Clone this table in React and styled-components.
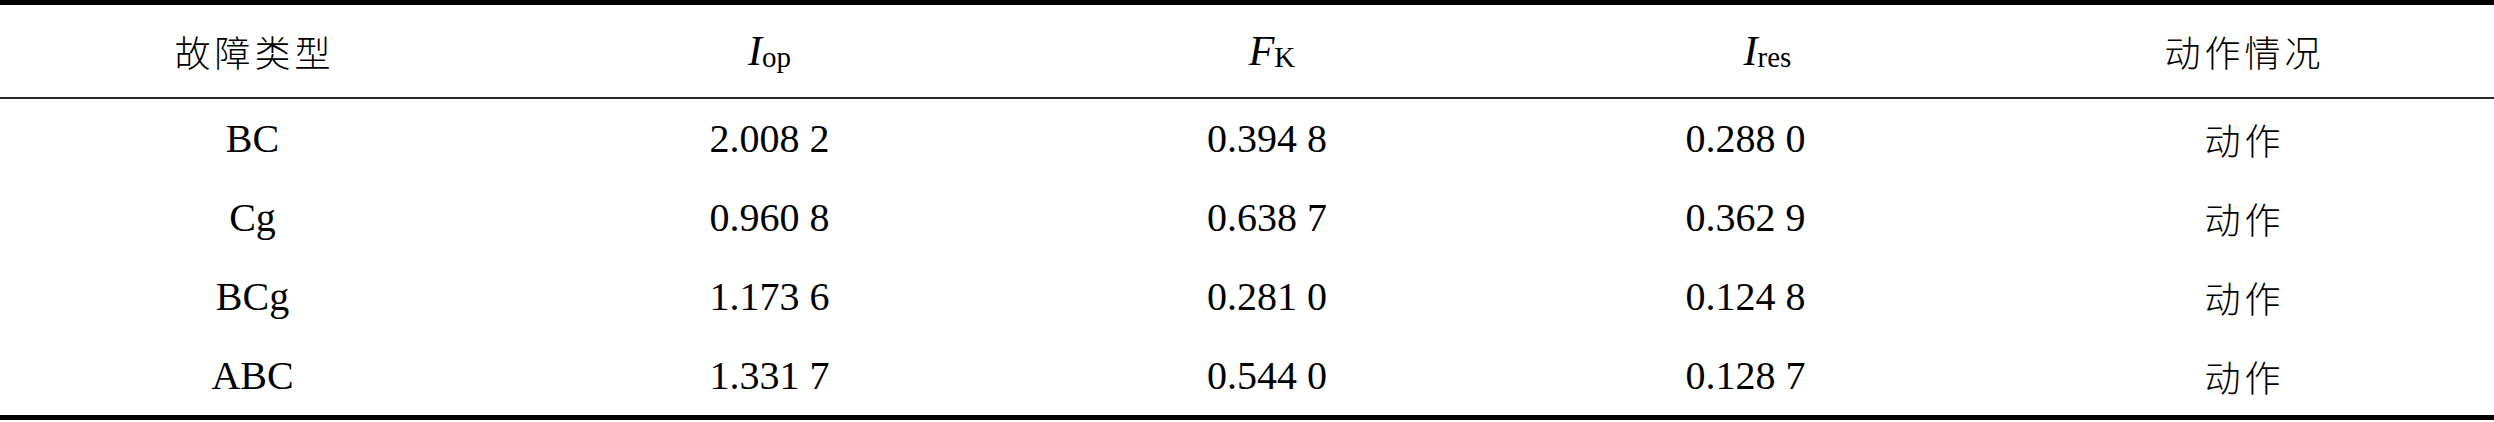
import React from 'react';
import styled, { createGlobalStyle } from 'styled-components';

const GlobalStyle = createGlobalStyle`
  html, body {
    margin: 0;
    padding: 0;
    background: #fff;
  }
`;

const COLUMNS = '505px 529px 466px 491px 1fr';

const Table = styled.div`
  width: 2494px;
  border-top: 5px solid #000;
  border-bottom: 5px solid #000;
  color: #000;
`;

const Row = styled.div`
  display: grid;
  grid-template-columns: ${COLUMNS};
  height: ${({ head }) => (head ? '92px' : '79px')};
  border-bottom: ${({ head }) => (head ? '2px solid #2a2a2a' : 'none')};
`;

const Cell = styled.div`
  display: flex;
  align-items: center;
  justify-content: center;
  padding-left: ${({ shift }) => (shift ? `${shift * 2}px` : '0')};
  font-family: "Liberation Serif", "Noto Sans CJK SC", serif;
  font-size: 40px;
  white-space: nowrap;
`;

const Han = styled.span`
  font-family: "Noto Sans CJK SC", sans-serif;
  font-weight: 300;
  font-size: 36px;
  letter-spacing: 4px;
  padding-left: 4px;
`;

const Var = styled.span`
  font-family: "Liberation Serif", serif;
  font-style: italic;
  font-size: 42px;
`;

const Sub = styled.span`
  font-family: "Liberation Serif", serif;
  font-size: 29px;
  position: relative;
  top: 6px;
`;

const rows = [
  ['BC', '2.008 2', '0.394 8', '0.288 0', '动作'],
  ['Cg', '0.960 8', '0.638 7', '0.362 9', '动作'],
  ['BCg', '1.173 6', '0.281 0', '0.124 8', '动作'],
  ['ABC', '1.331 7', '0.544 0', '0.128 7', '动作'],
];

const App = () => (
  <>
    <GlobalStyle />
    <Table>
      <Row head>
        <Cell><Han>故障类型</Han></Cell>
        <Cell><Var>I</Var><Sub>op</Sub></Cell>
        <Cell shift={5}><Var>F</Var><Sub>K</Sub></Cell>
        <Cell shift={22}><Var>I</Var><Sub>res</Sub></Cell>
        <Cell><Han>动作情况</Han></Cell>
      </Row>
      {rows.map((r) => (
        <Row key={r[0]}>
          {r.slice(0, 4).map((v, i) => <Cell key={i}>{v}</Cell>)}
          <Cell><Han>{r[4]}</Han></Cell>
        </Row>
      ))}
    </Table>
  </>
);

export default App;
